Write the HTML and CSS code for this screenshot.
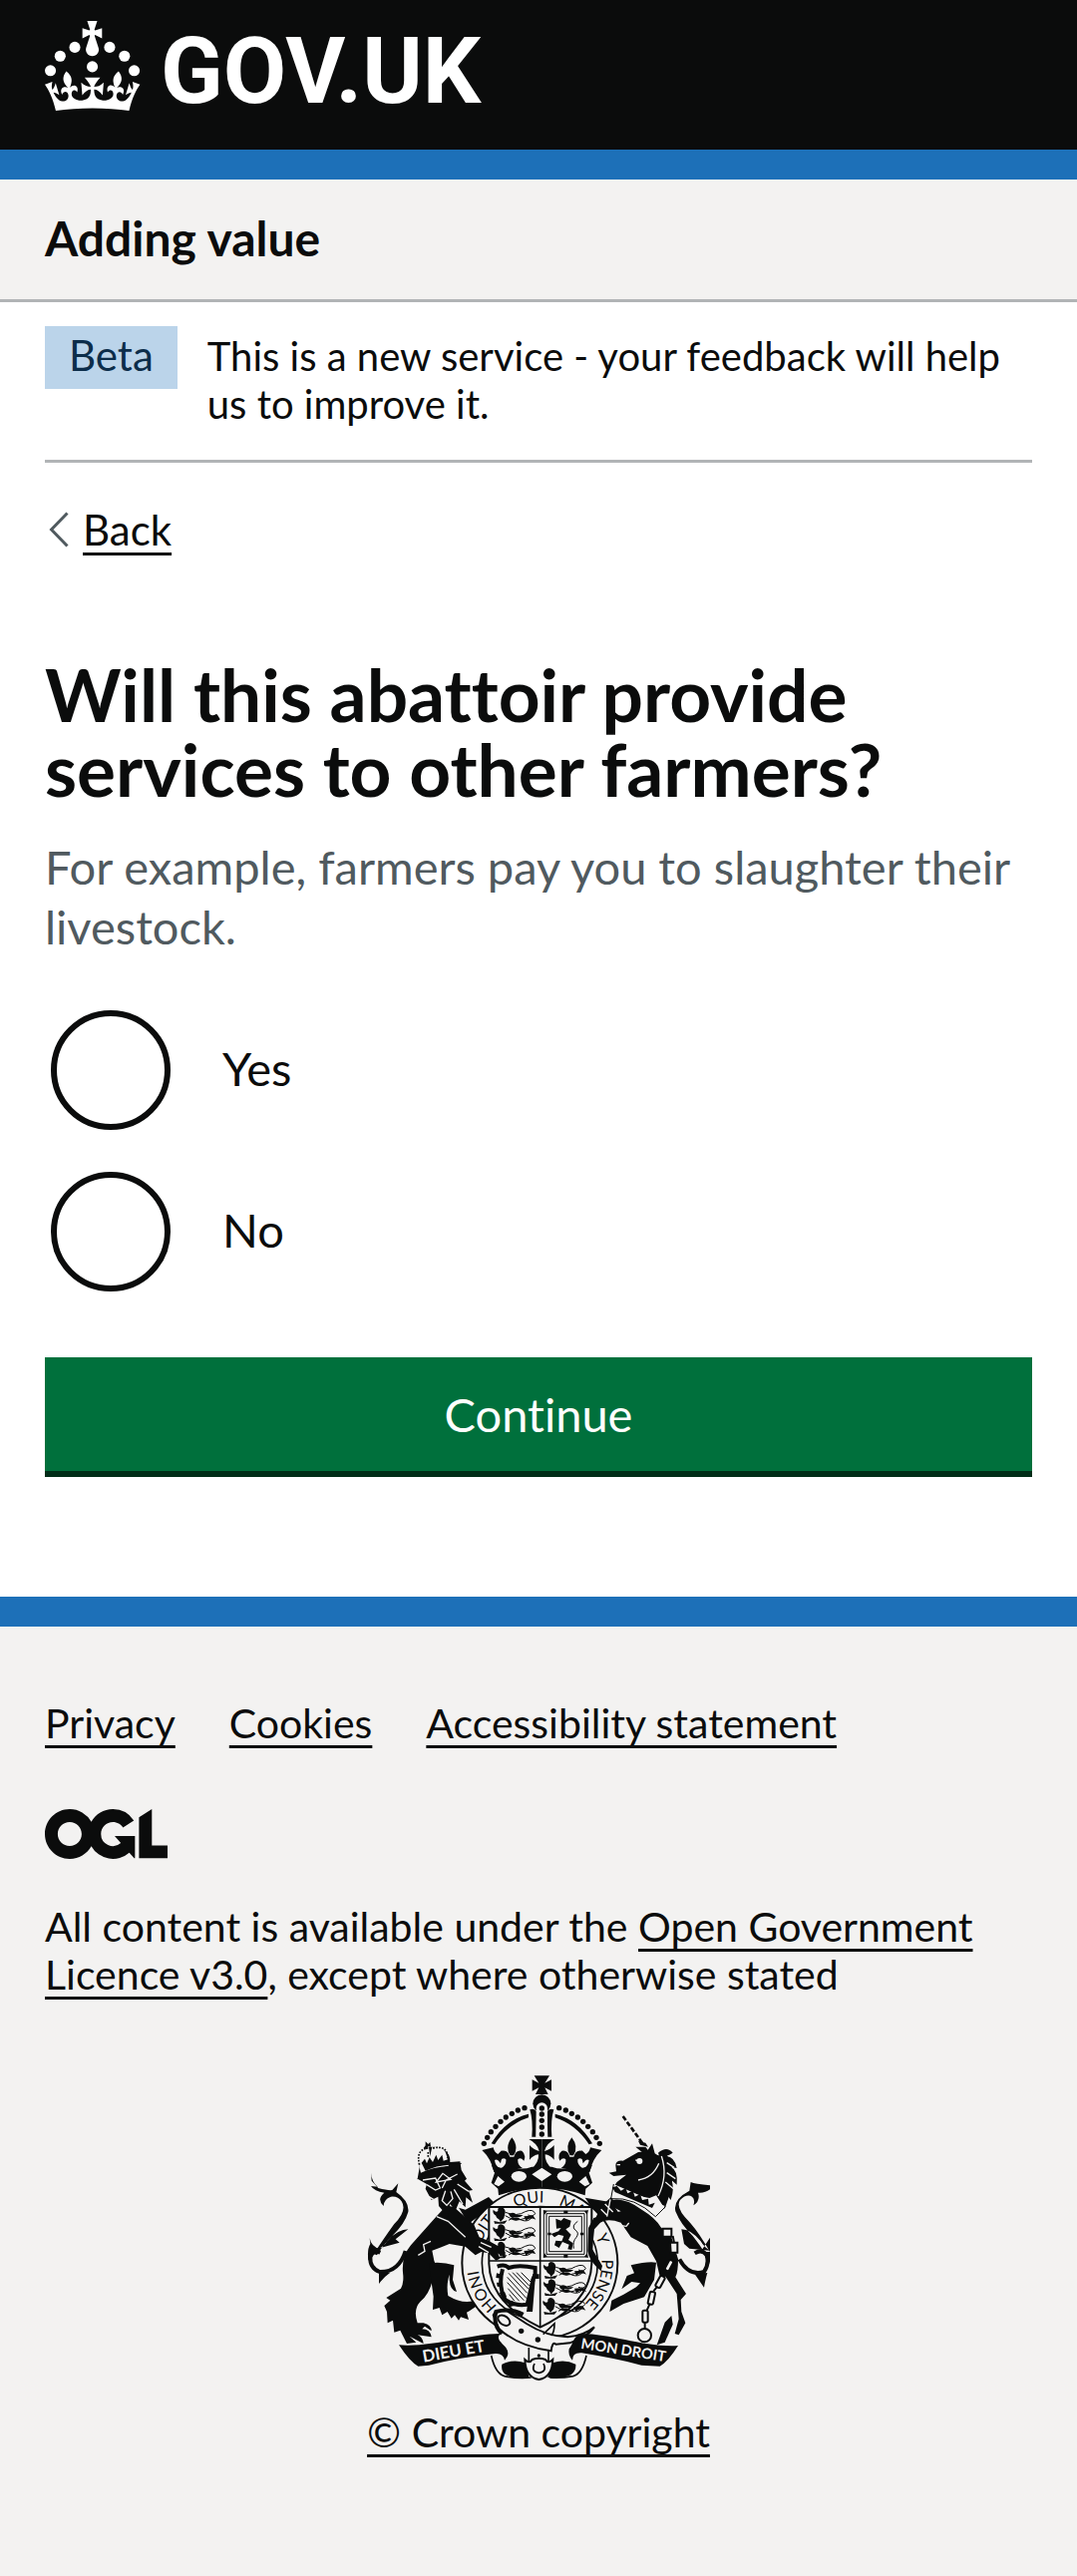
FILE: index.html
```html
<!DOCTYPE html>
<html lang="en">
<head>
<meta charset="utf-8">
<meta name="viewport" content="width=device-width, initial-scale=1">
<title>Will this abattoir provide services to other farmers?</title>
<link rel="stylesheet" href="styles.css">
</head>
<body>
<header>
  <div class="masthead">
    <a class="logo" href="#">
      <svg class="logo-crown" viewBox="0 0 64 60" aria-hidden="true">
        <circle cx="20" cy="17.6" r="3.7"/><circle cx="10.2" cy="23.5" r="3.7"/><circle cx="3.7" cy="33.2" r="3.7"/>
        <circle cx="31.7" cy="30.6" r="3.7"/><circle cx="43.3" cy="17.6" r="3.7"/><circle cx="53.2" cy="23.5" r="3.7"/><circle cx="59.7" cy="33.2" r="3.7"/>
        <path d="M33.1,9.8c.2-.1.3-.3.5-.5l4.6,2.4v-6.8l-4.6,1.5c-.1-.2-.3-.3-.5-.5l1.9-5.9h-6.7l1.9,5.9c-.2.1-.3.3-.5.5l-4.6-1.5v6.8l4.6-2.4c.1.2.3.3.5.5l-2.6,8c-.9,2.8,1.2,5.7,4.1,5.7h0c3,0,5.1-2.9,4.1-5.7l-2.6-8ZM37,37.9s-3.4,3.8-4.1,6.1c2.2,0,4.2-.5,6.4-2.8l-.7,8.5c-2-2.8-4.4-4.1-5.7-3.8.1,3.1.5,6.7,5.8,7.2,3.7.3,6.7-1.5,7-3.8.4-2.6-2-4.3-3.7-1.6-1.4-4.5,2.4-6.1,4.9-3.2-1.9-4.5-1.8-7.7,2.4-10.9,3,4,2.6,7.3-1.2,11.1,2.4-1.3,6.2,0,4,4.6-1.2-2.8-3.7-2.2-4.2.2-.3,1.7.7,3.7,3,4.2,1.9.3,4.7-.9,7-5.9-1.3,0-2.4.7-3.9,1.7l2.4-8c.6,2.3,1.4,3.7,2.2,4.5.6-1.6.5-2.8,0-5.3l5,1.8c-2.6,3.6-5.2,8.7-7.3,17.5-7.4-1.1-15.7-1.7-24.5-1.7h0c-8.8,0-17.1.6-24.5,1.7-2.1-8.9-4.7-13.9-7.3-17.5l5-1.8c-.5,2.5-.6,3.7,0,5.3.8-.8,1.6-2.3,2.2-4.5l2.4,8c-1.5-1-2.6-1.7-3.9-1.7,2.3,5,5.2,6.2,7,5.9,2.3-.4,3.3-2.4,3-4.2-.5-2.4-3-3.1-4.2-.2-2.2-4.6,1.6-6,4-4.6-3.7-3.7-4.2-7.1-1.2-11.1,4.2,3.2,4.3,6.4,2.4,10.9,2.5-2.8,6.3-1.3,4.9,3.2-1.8-2.7-4.1-1-3.7,1.6.3,2.3,3.3,4.1,7,3.8,5.4-.5,5.7-4.2,5.8-7.2-1.3-.2-3.7,1-5.7,3.8l-.7-8.5c2.2,2.3,4.2,2.7,6.4,2.8-.7-2.3-4.1-6.1-4.1-6.1h10.6Z"/>
      </svg>
      <span class="logo-text">GOV.UK</span>
    </a>
  </div>
  <div class="service-bar"><span class="service-name">Adding value</span></div>
</header>

<div class="container">
  <div class="phase-banner">
    <strong class="tag">Beta</strong>
    <span class="phase-text">This is a new service - your feedback will help us to improve it.</span>
  </div>
  <a class="back" href="#">
    <svg class="back-icon" viewBox="0 0 20 36" aria-hidden="true"><path d="M18.500 1.500L2.500 18l16 16.500"/></svg>
    <span class="back-text">Back</span>
  </a>
  <main>
    <form>
      <fieldset aria-describedby="hint">
        <legend><h1>Will this abattoir provide services to other farmers?</h1></legend>
        <p class="hint" id="hint">For example, farmers pay you to slaughter their livestock.</p>
        <div class="radios">
          <div class="radio"><input type="radio" name="services" id="yes" value="yes"><label for="yes">Yes</label></div>
          <div class="radio"><input type="radio" name="services" id="no" value="no"><label for="no">No</label></div>
        </div>
      </fieldset>
      <button class="button" type="button">Continue</button>
    </form>
  </main>
</div>

<footer>
  <ul class="footer-links">
    <li><a href="#">Privacy</a></li>
    <li><a href="#">Cookies</a></li>
    <li><a href="#">Accessibility statement</a></li>
  </ul>
  <svg class="ogl" viewBox="0 0 483.2 195.7" aria-hidden="true"><path d="M421.5 142.8V.1l-50.7 32.3v161.1h112.4v-50.7zm-122.3-9.6A47.12 47.12 0 0 1 221 97.8c0-26 21.1-47.1 47.1-47.1 16.7 0 31.4 8.7 39.7 21.8l42.7-27.2A97.63 97.63 0 0 0 268.1 0c-36.5 0-68.3 20.1-85.1 49.7A98 98 0 0 0 97.8 0C43.9 0 0 43.9 0 97.8s43.9 97.8 97.8 97.8c36.5 0 68.3-20.1 85.1-49.7a97.76 97.76 0 0 0 149.6 25.4l19.4 22.2h3v-87.8h-80l24.3 27.500zM97.8 145c-26 0-47.1-21.1-47.1-47.1s21.1-47.1 47.1-47.1 47.1 21.1 47.1 47.1S123.8 145 97.8 145"/></svg>
  <p class="licence">All content is available under the <a href="#">Open Government Licence v3.0</a>, except where otherwise stated</p>
  <a class="copyright" href="#">
    <svg class="arms" viewBox="54 57 1032 918" aria-hidden="true">
      <defs>
        <path id="garter" d="M452 757A186 181 0 1 1 696 757"/>
        <g id="half-crown">
          <g><circle cx="528" cy="155" r="8"/><circle cx="508" cy="162" r="8"/><circle cx="490" cy="172" r="8"/><circle cx="472" cy="183" r="8"/><circle cx="456" cy="196" r="8"/><circle cx="441" cy="211" r="8"/><circle cx="427" cy="227" r="8"/><circle cx="416" cy="244" r="8"/><circle cx="406" cy="262" r="8"/></g>
          <path d="M540 173Q470 190 428 262L438 265Q478 204 540 184Z"/>
          <path d="M544 160q14-6 20 6l-2 76h-12q4-50-6-82z"/>
          <path d="M490 244q-22 28-5 54h10q17-26-5-54zM484 302q-6-22-24-18-14 12-6 30 10-12 18-4 2 16-14 26h64q-16-10-14-26 8-8 18 4 8-18-6-30-18-4-24 18z"/>
          <path d="M541 249h39v90h-32q24-20 22-44-16 2-27 16v-44q12 14 29 18-4-22-31-36z"/>
          <path d="M400 282l34-8q2 14 14 20l12-12q2 22-4 40-10-16-18-10 2 18 16 24l-18 12q-8-40-36-66z"/>
          <path d="M428 326q30 18 62 4 26 14 60 2h30v64q-70 0-130 22l-2-20-20-18 10-30z"/>
        </g>
        <g id="passant">
          <path d="M10 12q-12-8-8-18 8 10 14 4-2-10 8-12 14 2 14 16l-4 18q-8 8-10 12-4-10-10-12-4-4-4-8z"/>
          <path class="thin" d="M38 2q36 14 60-2 24-10 30 6-6 10-22 4m-68 2q30 20 60 8m-50 6q20-14 40 0 18 6 30-8"/>
          <path d="M48 8q14-10 24 2l20 0q-10 10-26 6-10 8-18-8zM54 22q14-8 28 0-10 10-28 0zM94 14l28-2 8 12q-18-8-30 4zM4 28l18 4 22-6-8 10H6z"/>
        </g>
      </defs>

      <!-- Crown -->
      <path d="M557 58h46l-14 22 20-10v34l-20-10 10 20h-38l10-20-20 10V70l20 10z"/>
      <circle cx="580" cy="142" r="27"/>
      <use href="#half-crown"/><use href="#half-crown" transform="translate(1160) scale(-1 1)"/>
      <path class="paper" d="M563 242V156a17 17 0 0 1 34 0v86z"/>
      <circle cx="580" cy="156" r="8"/><circle cx="580" cy="174" r="8"/><circle cx="580" cy="193" r="8"/><circle cx="580" cy="213" r="8"/><circle cx="580" cy="234" r="8"/>
      <g class="paper"><path d="M580 335l30 20-30 20-30-20zM436 384l12-24 20 17-18 14zM724 384l-12-24-20 17 18 14z"/><ellipse cx="511" cy="361" rx="23" ry="16"/><ellipse cx="649" cy="361" rx="23" ry="16"/></g>

      <!-- Garter -->
      <path d="M330 455l20 6 70-38 20 20-80 60zM710 425l80 14 20 30-50 30z"/>
      <ellipse class="band" cx="574" cy="622" rx="234" ry="227"/>
      <ellipse class="line" cx="574" cy="622" rx="174" ry="170"/>
      <g class="motto">
        <text><textPath href="#garter" startOffset="8">HONI</textPath></text>
        <text><textPath href="#garter" startOffset="188">SOIT</textPath></text>
        <text><textPath href="#garter" startOffset="368">QUI</textPath></text>
        <text><textPath href="#garter" startOffset="500">MAL</textPath></text>
        <text><textPath href="#garter" startOffset="650">Y</textPath></text>
        <text><textPath href="#garter" startOffset="722">PENSE</textPath></text>
      </g>

      <!-- Shield -->
      <path class="field" d="M421 453h309v170q-4 120-155 192Q425 743 421 623z"/>
      <path class="thick" d="M575 453v362M421 615h309"/>
      <use href="#passant" x="432" y="467"/><use href="#passant" x="432" y="519"/><use href="#passant" x="432" y="571"/>
      <use href="#passant" x="584" y="632"/><use href="#passant" x="584" y="684"/><use href="#passant" x="582" y="740"/>
      <path class="thin" d="M586 465h130v138H586zM594 473h114v122H594zM602 481h98v106h-98z"/>
      <path d="M584 462l12 4-8 10zM720 462l-12 4 8 10zM584 606l12-4-8-10zM720 606l-12-4 8-10zM646 464h12v8h-12zM646 597h12v8h-12zM696 530h10v8h-10zM598 530h10v8h-10z"/>
      <path d="M622 488l16 6 8-8 22 8-4 18-12 8 16 16-8 16 14 10-4 20-12-2 4-14-20-8-10 18-14-8 4-14 18 2 6-16-16-4-12 8-10-10 22-8 8-10-14 2z"/>
      <path class="thin" d="M676 578q-4-22 8-34 10-14-4-22-12-12 8-26"/>
      <path class="harp" d="M446 632q24-8 34 4 30-10 80 0v26M462 640q-14 50 8 92 30 20 66 14l20-84"/>
      <path d="M444 652l16 4v12l-18-2zM444 680l18 0v14l-16-2zM452 710l16-2 6 14-14 4zM478 740l14-6 6 16-16 4zM552 655h20v14h-20zM534 768l14-100 12 2-8 98z"/>
      <path class="thin" d="M480 652l56 60M492 650l48 50M504 650l38 40M518 650l28 28M476 664l58 64M476 680l50 54M478 698l34 38M482 716l16 20"/>

      <!-- Lion -->
      <path d="M262 482L186 568Q158 600 162 650q4 30-6 48l-44 28 12 8-18 16 8 18 2 34 16-8 4 36 18-6 20 40 28-4-20-18 42 22q-2-20-18-26l42 6q-4-24-28-24l8-8 20 14q0-18-24-24l-18 0q-14-40 8-64 26-20 38-66l14 44q10-30 4-62l-14-40-6-30 22-8 30-12 48 8 30 26 18-10 22 4 22 22 12-6-6-16 22 14v-18l-22-18-26-14-30-12-16-38-34-30-26-22-22-6z"/>
      <path d="M240 622q40-6 76 6l-4 44 12 36q-20-4-22-36v-16q-10 30-4 64 40 24 74 16l10 16-20 14-8 4 6 22-24-8-6 10-12-16-10 10-12-20-16 10-8-22-20 6 2-40z"/>
      <path d="M206 368l6-34q-12-40 24-62h30q40 12 38 46l30-2 4 26 16 26-6 6 24 28-12 2 12 36-20-16-2 30-18-18-12 28-16-20-6 38-28-32-2-28-20 10-18-34 4-14z"/>
      <path class="paper" d="M206 310q12-44 34-36l4 26 6-28q38-4 44 26l6 32q-46 2-84 20z"/>
      <path class="thin" d="M206 368q60-34 132-46"/>
      <path d="M230 256l8 8 6-6 2 14-8-2-4 10-10-4 6-8zM218 320l10-12 6 14 8-18 10 14 10-22 6 16 12-16 4 18 18-6 0 18q-40 2-72 18z"/>
      <path class="beads" d="M212 326q-12-46 26-50M252 276q46-10 44 30M238 288v14"/>
      <path class="cut" d="M222 372l38-6 14 30-14 6-26-16M280 396l12-24 34-18M282 352l-20 26 44-8zM234 418l20 12M290 404l-10 30 14 14 18-20-6-22M316 400l26 44M326 384l34 22M264 482l34 14 52 48M208 598l20-12-4-20 22-10M390 572l30 18M396 560l32 14"/>
      <path class="tail" d="M170 585Q150 650 92 648 62 636 64 604q8-24 30-14"/>
      <path d="M68 374l20 22q30 8 42 6l18-20-6 26q40 28 36 60-10 36-50 74-30 30-44 56l-10-4q40-60 62-90 40-40 22-68-10-16-32-14-22 8-22 28-22-20 2-40-30-4-40-20l20 2q-18-16-20-42zM62 546q4 26 32 34-20 4-36 34-4-34 6-50zM178 520q-30 0-62 34-14 22-30 24l66-18-12-10zM90 650l0 34q14-20 34-34z"/>

      <!-- Unicorn -->
      <path d="M770 440q46-26 112 22 40 24 56 52l32 30 20 66q0 40-8 54l32 50-16 18 2 36 12 34-20 36-12-4 12-44-6-76-34-52-16 4-12-50-26-46-50-26-30-44q-40-14-62 0l-18 20-6 60 30 50-4 16q-36-30-40-60l2-70 16-30 42-12 40-8z"/>
      <path d="M848 628q50-12 76-8l-6 52-30 52-62 20-42 24 6-34 36-18 38-22 12-12-26-4-30 22 16-40 22-8z"/>
      <path d="M802 328q0-16 22-14l46-26 26-2 16-24 8 30q14 12 34 2 40 50-4 164l-26-40-20 8-52-10-40-12-16-12 10-14 28-22-38 4-14-10 22-4z"/>
      <path d="M930 290q26-22 44 0-8 6-20 10 26 2 32 36l-18-4q22 10 18 54l-16-14q10 24-2 60l-12-16-8 32-18-30 22-60zM862 272l30 0 14 18-20 2zM870 254l22 6 8 12-24-6z"/>
      <path class="horn" d="M824 180l58 80"/>
      <path class="paper" d="M790 382l160 68-26 32q-40-34-90-50l-46-6z"/>
      <path class="thin" d="M796 384l-8 44q72-6 134 54l30-30"/>
      <path d="M806 390l12 14 14-8 6 16 16-8 6 18 16-8 6 18 18-4 2 18 18-6-8 16-112-48-8-14z"/>
      <path class="cut" d="M870 372q44-6 62-50M862 312l20 4M940 300q20 60-10 120M806 326h10M790 505l44 6 8-10M956 320l22 14M956 350l26 18M952 378l24 20"/>
      <circle class="paper" cx="874" cy="315" r="9"/>
      <path d="M950 800l20-20 4 26-24 54-24 8z"/>
      <path class="tail" d="M994 610q28 52 74 38 16-22 8-50-14-20-36-6"/>
      <path d="M1086 388q-46-4-58-10l-4 26q-50 26-42 62 16 40 52 74 22 28 34 48h18q-32-56-60-88-46-44-30-68 20-20 36-10 10 8 4 26 22-14 14-38 20 2 36-10zM1000 520q28 0 58 36 10 18 28 28l-62-6-16-14zM1086 545v80q-8-30-28-38zM1040 655l28 40q4-24 10-44z"/>
      <path d="M742 486l16-36 30-26 14 16-10 40-40 16z"/><path class="cut" d="M770 444l24 24M786 430l-10 52M758 460l20 20"/>
      <g class="chain"><path d="M944 518h26v24h-26zM966 560h22v30h-20zM974 540l4 20M968 618l-18 24M972 588v18"/><rect x="956" y="612" width="14" height="34" rx="5" transform="rotate(28 963 629)"/><rect x="928" y="660" width="16" height="36" rx="5" transform="rotate(28 936 678)"/><rect x="902" y="708" width="16" height="38" rx="5" transform="rotate(12 910 727)"/><rect x="883" y="764" width="16" height="36" rx="5"/><path d="M952 642l-8 16M926 694l-10 12M904 746l-8 18M890 800v18"/><circle cx="889" cy="839" r="20"/></g>

      <!-- Buckle and strap -->
      <path class="strap" d="M434 778q8-18 42-12l58 38q60 38 124 40 50-4 80-30-20 30-74 48l-42 4q-10-10-14 20-100-14-158-68z"/>
      <path class="buckle" d="M524 776q-40-20-82-8-10 40 18 66"/>
      <ellipse class="strap" cx="466" cy="794" rx="20" ry="13" transform="rotate(35 466 794)"/>
      <circle cx="518" cy="826" r="8"/><circle cx="568" cy="852" r="8"/>
      <path class="thick" d="M584 836l34-32q0 26-10 36"/>
      <path class="line" d="M541 876v44M600 886v34"/><circle cx="571" cy="900" r="5"/>

      <!-- Scrolls -->
      <path d="M150 868C250 876 380 832 456 834 440 848 458 860 472 876Q486 896 468 914 464 892 440 894 340 904 240 929L208 932Q184 920 150 868z"/>
      <path d="M990 870C890 876 780 832 696 834 672 846 676 862 662 880Q658 900 672 914 672 890 700 892 800 908 880 929L935 932Q960 918 990 870z"/>
      <path class="line" d="M428 900q12 54 40 62 40 8 80 4M714 900q-12 54-40 62-34 6-70 4"/>
      <path d="M460 926q34-16 70-4l12 44q-44 4-70-8-16-12-12-32zM682 926q-34-16-70-4l-14 44q44 4 70-8 16-12 14-32z"/>
      <path class="strap" d="M529 912q14 14 22 0 20-8 40 0 8 14 22 0-2 54-42 60-40-6-42-60z"/><path class="line" d="M558 924q-12 24 13 28 26-4 14-28"/>
      <text class="scroll" transform="translate(224 920) rotate(-10)">DIEU ET</text>
      <text class="scroll scroll-right" transform="translate(696 878) rotate(9)">MON DROIT</text>
    </svg>
    <span>© Crown copyright</span>
  </a>
</footer>
</body>
</html>
```
FILE: styles.css
```css
* {
  box-sizing: border-box;
}

body {
  margin: 0;
  background: #f3f2f1;
  color: #0b0c0c;
  font-family: Lato, "Liberation Sans", sans-serif;
  font-size: 41px;
  font-variant-ligatures: none;
  line-height: 48px;
}

a {
  color: inherit;
  text-decoration: underline;
  text-decoration-thickness: 3px;
  text-decoration-skip-ink: none;
  text-underline-offset: 7px;
}

.masthead {
  padding: 21px 45px 39px;
  background: #0b0c0c;
  border-bottom: 30px solid #1d70b8;
}

.logo {
  display: flex;
  align-items: center;
  gap: 20px;
  height: 90px;
  color: #ffffff;
  text-decoration: none;
}

.logo-crown {
  width: 96px;
  height: 90px;
  fill: currentColor;
  overflow: visible;
}

.logo-text {
  padding-top: 12px;
  font-family: Roboto, sans-serif;
  font-size: 92px;
  font-weight: 700;
  line-height: 90px;
}

.service-bar {
  padding: 29px 45px 31px;
  border-bottom: 3px solid #b1b4b6;
}

.service-name {
  display: block;
  font-size: 48px;
  font-weight: 700;
  line-height: 60px;
}

.container {
  padding: 0 45px 126px;
  background: #ffffff;
}

.phase-banner {
  display: flex;
  align-items: baseline;
  gap: 30px;
  padding: 24px 0 32px;
  border-bottom: 3px solid #b1b4b6;
}

.tag {
  padding: 4px 24px 8px;
  background: #bbd4ea;
  color: #0c2d4a;
  font-size: 42px;
  font-weight: 400;
  line-height: 51px;
}

.phase-text {
  font-size: 40px;
}

.back {
  display: inline-flex;
  align-items: center;
  gap: 14px;
  margin: 43px 0 104px;
  padding-left: 4px;
  font-size: 42px;
  text-decoration: none;
}

.back-icon {
  width: 20px;
  height: 36px;
  fill: none;
  stroke: #505a5f;
  stroke-width: 3;
}

.back-text {
  text-decoration: underline;
  text-decoration-thickness: 3px;
  text-underline-offset: 7px;
}

fieldset {
  margin: 0;
  padding: 0;
  border: 0;
}

legend {
  padding: 0;
}

h1 {
  margin: 0 0 30px;
  font-size: 73px;
  line-height: 75px;
}

.hint {
  margin: 0 0 54px;
  color: #505a5f;
  font-size: 47px;
  line-height: 60px;
}

.radios {
  display: grid;
  gap: 42px;
}

.radio {
  display: flex;
  align-items: center;
  gap: 52px;
  padding-left: 6px;
  font-size: 47px;
  line-height: 60px;
}

.radio input {
  appearance: none;
  flex: none;
  width: 120px;
  height: 120px;
  margin: 0;
  border: 6px solid #0b0c0c;
  border-radius: 50%;
}

.radio input:checked {
  background: radial-gradient(#0b0c0c 30px, transparent 31px);
}

.radio label {
  padding-bottom: 4px;
}

.button {
  display: block;
  width: 100%;
  height: 114px;
  margin: 66px 0 0;
  border: 0;
  background: #00703c;
  box-shadow: 0 6px 0 #002d18;
  color: #ffffff;
  font: inherit;
  font-size: 47px;
  font-variant-ligatures: none;
  line-height: 60px;
}

footer {
  padding: 73px 45px 122px;
  border-top: 30px solid #1d70b8;
}

.footer-links {
  display: flex;
  flex-wrap: wrap;
  gap: 30px 54px;
  margin: 0 0 62px;
  padding: 0;
  list-style: none;
}

.ogl {
  display: block;
  width: 123px;
  height: 50px;
  fill: currentColor;
}

.licence {
  margin: 44px 0 77px;
}

.copyright {
  display: flex;
  flex-direction: column;
  align-items: center;
  gap: 28px;
}

.arms {
  width: 344px;
  height: 306px;
  fill: #0b0c0c;
}

.paper {
  fill: #f3f2f1;
}

.band,
.field,
.strap {
  fill: #f3f2f1;
  stroke: #0b0c0c;
  stroke-width: 6;
}

.line,
.thin,
.thick {
  fill: none;
  stroke: #0b0c0c;
  stroke-width: 5;
}

.thin {
  stroke-width: 3;
}

.cut {
  fill: none;
  stroke: #f3f2f1;
  stroke-width: 4;
}

.harp,
.tail,
.buckle {
  fill: none;
  stroke: #0b0c0c;
  stroke-width: 12;
}

.beads {
  fill: none;
  stroke: #0b0c0c;
  stroke-width: 5;
  stroke-dasharray: 5 4;
}

.horn {
  fill: none;
  stroke: #0b0c0c;
  stroke-width: 8;
  stroke-dasharray: 15 6;
}

.chain {
  fill: #f3f2f1;
  stroke: #0b0c0c;
  stroke-width: 6;
}

.motto {
  font-size: 48px;
}

.scroll {
  fill: #f3f2f1;
  font-size: 50px;
  font-weight: 700;
}

.scroll-right {
  font-size: 44px;
}
```
